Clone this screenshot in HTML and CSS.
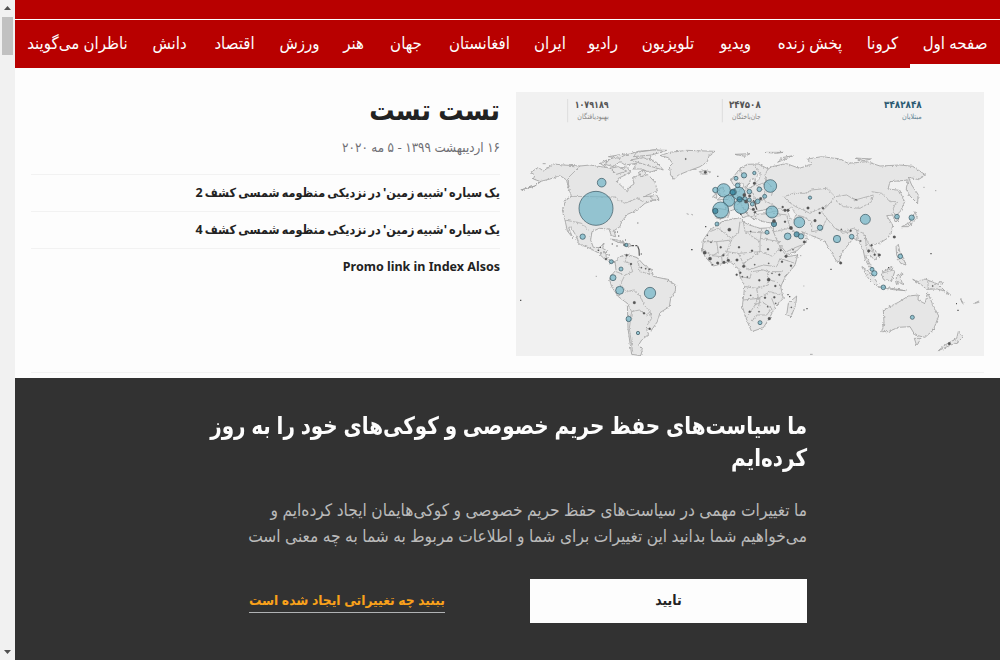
FILE: index.html
```html
<!DOCTYPE html>
<html lang="fa" dir="rtl">
<head>
<meta charset="utf-8">
<title>صفحه اول</title>
<link rel="stylesheet" href="styles.css">
</head>
<body>
<div class="page">
  <header class="brand"></header>
  <nav class="nav">
    <a class="nav-item active" style="width:66px">صفحه اول</a>
    <a class="nav-item" style="width:31px">کرونا</a>
    <a class="nav-item" style="width:66px">پخش زنده</a>
    <a class="nav-item" style="width:35px">ویدیو</a>
    <a class="nav-item" style="width:52px">تلویزیون</a>
    <a class="nav-item" style="width:30px">رادیو</a>
    <a class="nav-item" style="width:28px">ایران</a>
    <a class="nav-item" style="width:65px">افغانستان</a>
    <a class="nav-item" style="width:34px">جهان</a>
    <a class="nav-item" style="width:23px">هنر</a>
    <a class="nav-item" style="width:37px">ورزش</a>
    <a class="nav-item" style="width:45px">اقتصاد</a>
    <a class="nav-item" style="width:37px">دانش</a>
    <a class="nav-item" style="width:99px">ناظران می‌گویند</a>
  </nav>
  <main class="story">
    <svg class="media" viewBox="18 21 1404 792" direction="ltr">
      <defs>
        <filter id="rough" x="-2%" y="-2%" width="104%" height="104%">
          <feTurbulence type="fractalNoise" baseFrequency="0.14" numOctaves="2" seed="4"/>
          <feDisplacementMap in="SourceGraphic" scale="9" xChannelSelector="R" yChannelSelector="G"/>
        </filter>
      </defs>
      <rect class="sea" x="18" y="21" width="1404" height="792"/>
      <g filter="url(#rough)">
        <g class="land">
          <!-- North and Central America -->
          <path d="M32 315L75 303L92 290L70 282L75 270L62 262L85 247L100 258L130 237L160 240L210 243L240 240L285 247L320 252L350 245L362 262L325 280L322 292L337 305L350 319L360 305L372 297L368 280L395 265L415 270L435 292L442 318L400 335L425 333L446 340L405 355L382 375L352 388L335 410L330 425L312 437L317 455L304 452L297 432L268 430L246 440L242 465L250 487L270 488L283 472L278 490L290 497L288 515L302 527L315 530L300 535L284 522L262 502L240 490L207 477L197 450L182 425L176 428L188 458L172 438L165 405L157 375L168 343L185 335L174 305L170 285L150 272L120 282L88 290L75 303Z"/>
          <path d="M285 238L300 222L330 212L360 207L385 199L440 194L455 200L425 207L420 220L445 240L440 255L420 262L395 252L370 252L380 235L345 240L330 230L310 245ZM300 250L325 245L350 258L320 268ZM270 235L290 225L285 245ZM385 262L402 255L410 270L392 275Z"/>
          <path d="M380 202L430 195L470 196L425 210L370 215ZM295 215L350 206L330 220ZM360 225L400 218L440 232L460 255L425 245Z"/>
          <path d="M450 212L480 202L530 196L615 199L598 210L592 230L570 245L535 258L505 270L492 283L482 270L478 245L488 235L475 218Z"/>
          <path d="M568 260L585 256L602 261L590 268L575 267ZM420 335L440 330L447 343L430 345ZM302 462L322 465L345 475L325 472ZM340 478L360 476L362 484L342 483Z"/>
          <!-- South America -->
          <path d="M315 530L330 515L350 508L382 518L402 540L425 553L430 574L470 583L497 600L496 618L482 640L478 665L450 683L442 710L425 735L408 730L416 748L395 765L386 780L397 795L392 812L365 808L360 775L354 730L352 655L325 635L305 605L299 585L305 570L318 555Z"/>
          <!-- Africa and Madagascar -->
          <path d="M620 420L640 408L690 398L702 412L718 420L750 430L790 428L796 445L812 490L832 515L863 510L855 540L825 577L812 605L820 640L796 665L778 700L760 728L725 740L712 710L697 665L704 605L690 575L686 552L660 530L640 535L610 543L585 515L577 495L580 465L600 435ZM860 633L857 660L843 695L830 690L835 655Z"/>
          <!-- Eurasia -->
          <path d="M617 378L622 370L648 374L644 350L630 343L660 335L685 318L700 305L712 312L735 300L735 280L720 285L710 308L695 295L670 300L663 285L690 250L712 238L745 237L775 252L785 245L830 236L868 250L905 238L893 222L935 215L985 221L1015 235L1070 230L1110 243L1170 240L1208 244L1247 270L1225 284L1195 276L1205 300L1224 328L1223 356L1200 333L1188 312L1195 285L1140 290L1134 312L1168 316L1184 350L1172 378L1160 390L1166 405L1155 410L1148 390L1130 392L1148 420L1144 442L1132 460L1110 474L1080 480L1092 495L1110 510L1094 525L1075 505L1068 515L1088 552L1078 545L1066 525L1060 498L1048 468L1030 460L994 505L988 530L979 528L960 495L944 468L920 458L875 440L895 463L860 498L833 508L805 475L790 440L790 415L760 410L735 400L740 388L790 385L785 370L760 375L735 380L730 402L712 388L700 370L715 392L700 398L678 372L660 378L655 395L630 402L616 398Z"/>
          <path d="M622 345L632 335L625 315L638 306L645 330L655 343ZM608 335L620 325L620 340ZM675 208L720 206L705 214ZM765 202L820 202L800 205ZM1035 219L1085 222L1060 227ZM803 232L815 218L850 212L825 222Z"/>
          <!-- South-East Asia and Oceania -->
          <path d="M1054 543L1080 562L1104 595L1098 603L1075 580ZM1100 605L1140 609L1186 617L1150 614ZM1120 560L1145 547L1154 560L1145 588L1120 583L1115 570ZM1162 570L1182 565L1170 575L1178 598L1164 590L1160 600L1156 585ZM1208 583L1225 590L1245 582L1285 598L1305 618L1280 612L1250 613L1235 600ZM1158 485L1165 478L1170 503L1180 520L1188 540L1172 535L1160 510ZM1175 425L1200 412L1210 390L1215 380L1222 400L1195 425Z"/>
          <path d="M1120 675L1165 652L1195 633L1225 630L1224 645L1245 656L1253 623L1267 656L1286 693L1270 735L1245 757L1215 750L1200 725L1165 727L1135 740L1115 740L1122 714ZM1213 760L1233 760L1220 782ZM1345 740L1360 755L1345 770L1285 797L1305 780L1340 760Z"/>
          <path d="M1285 590L1300 591L1295 600ZM1310 620L1322 630L1312 627ZM1352 642L1360 655M1393 655L1408 652"/>
        </g>
        <g class="water">
          <path d="M735 295L748 282L752 262L742 272L735 290ZM765 385L800 378L812 392L780 396ZM832 375L845 366L857 390L852 405L840 400Z"/>
        </g>
        <g class="borders">
          <path d="M210 243L170 283M180 334L315 336L330 348L345 355L380 340L400 350M165 405L215 415L235 435M262 488L268 500M284 505L300 512M350 510L345 530L360 535L368 560L345 570L330 600L352 620L370 615L392 635L402 660L420 680L425 700L412 720M318 560L345 570M352 655L365 680L388 675L410 690L420 680M365 680L358 730L368 800M382 520L390 560L430 570M415 548L418 570"/>
          <path d="M625 430L665 460L685 445L690 410M700 410L705 440L780 445M705 440L750 470L755 430M600 440L625 430M580 470L620 470L625 505L600 512M620 470L665 465L650 500L685 505L750 500L750 470M580 495L605 512L635 515L650 500M635 515L637 535M655 505L650 530M685 505L700 535L750 500L790 515M700 535L715 555L760 540L800 545L810 520L855 535M690 575L720 580L725 560M725 560L760 555L775 560L775 600L740 610L705 605M775 560L815 560M775 585L800 590L815 605M740 610L745 640L700 645M745 640L780 620L815 630M745 640L735 660L715 690M735 660L755 650L785 670L770 690L740 690L725 710M785 640L795 665M750 460L810 470M790 510L810 490M750 640L745 670"/>
          <path d="M648 374L660 378M660 335L680 360L705 345L735 350M680 325L690 350L700 370M705 315L730 325L735 350L760 345L765 320L740 300M760 345L790 360L800 370M715 370L735 378M690 250L700 280M735 240L748 262M775 250L765 270L770 290L745 300M770 290L790 310L785 330M790 385L830 390L840 430M800 370L830 375M857 390L880 395L905 410L905 440M857 365L835 350L822 335L850 325L885 325L905 315L950 310L975 335L960 355L930 370L900 385L880 375L857 365M975 335L1010 330L1035 345L1090 330L1085 350L1050 370L1000 365L975 345M1085 320L1115 325L1140 350L1160 350L1150 370L1155 390M960 355L935 380L950 400L975 430L1000 440L1030 430L1060 445L1075 475M905 440L935 435L950 400M975 430L1000 445L1022 440M1040 435L1045 465M1065 450L1070 490L1095 505M1075 475L1090 500M790 440L840 430L870 450M830 500L850 490L875 480M1253 585L1255 613M1115 565L1150 555"/>
        </g>
      </g>
      <path class="specks" d="M321 441h3M324 453h4M305 477h4M319 483h4M345 465h3M340 480h8M364 482h8M376 482h6M383 484l4 10l1 18M392 507h4M269 487h4M263 496h4M271 504h4M280 501h4M382 414h3M543 494h5M30 646h4M622 274h3M832 629h4M837 635h4M880 675h4M889 671h4M961 553h4M1261 506h4M1150 455h4M1338 656h3M1342 676h4M690 388h5M585 425h4M730 345l8 15M735 360l6 14M1134 548h4"/>
      <path class="faint" d="M98 236h9M175 285v25M257 574h4M530 386l6 2M544 388l5 2M900 808h8M880 603h3M1240 307h4M1275 317h4M870 512h4M1352 642l6 14M1395 654l12-6"/>
      <g class="bubbles">
        <circle cx="258" cy="370" r="51"/><circle cx="275" cy="293" r="13"/><circle cx="218" cy="455" r="8"/><circle cx="304" cy="530" r="6"/><circle cx="333" cy="552" r="6"/><circle cx="309" cy="578" r="9"/><circle cx="329" cy="616" r="12"/><circle cx="420" cy="624" r="17"/><circle cx="356" cy="702" r="8"/><circle cx="384" cy="744" r="5"/><circle cx="349" cy="480" r="5"/>
        <circle cx="641" cy="316" r="20"/><circle cx="616" cy="315" r="8"/><circle cx="657" cy="347" r="17"/><circle cx="686" cy="325" r="19"/><circle cx="670" cy="321" r="9"/><circle class="deep" cx="668" cy="322" r="8"/><circle cx="632" cy="375" r="24"/><circle class="deep" cx="616" cy="378" r="8"/><circle cx="694" cy="364" r="22"/><circle cx="683" cy="301" r="7"/><circle cx="678" cy="280" r="6"/><circle cx="702" cy="271" r="8"/><circle cx="718" cy="320" r="7"/><circle class="deep" cx="689" cy="343" r="8"/><circle cx="705" cy="341" r="6"/><circle cx="733" cy="264" r="5"/><circle cx="718" cy="345" r="6"/><circle cx="748" cy="313" r="7"/><circle cx="764" cy="334" r="6"/><circle cx="743" cy="349" r="7"/><circle cx="727" cy="357" r="6"/><circle cx="781" cy="303" r="19"/><circle cx="786" cy="381" r="18"/><circle class="deep" cx="792" cy="417" r="8"/><circle cx="868" cy="412" r="16"/><circle cx="1066" cy="403" r="15"/><circle cx="1161" cy="395" r="7"/><circle cx="1205" cy="398" r="8"/><circle cx="621" cy="417" r="6"/><circle cx="771" cy="442" r="6"/><circle cx="833" cy="454" r="10"/><circle class="deep" cx="860" cy="448" r="8"/><circle cx="873" cy="454" r="8"/><circle cx="930" cy="428" r="8"/><circle cx="981" cy="462" r="11"/><circle cx="1025" cy="455" r="7"/><circle cx="1171" cy="514" r="7"/><circle cx="1086" cy="553" r="6"/><circle cx="1093" cy="565" r="8"/><circle cx="1120" cy="607" r="7"/><circle cx="1207" cy="697" r="6"/><circle cx="750" cy="713" r="6"/><circle cx="900" cy="338" r="5"/>
      </g>
      <g class="dots">
        <circle cx="527" cy="222" r="2"/><circle cx="586" cy="262" r="4"/><circle cx="363" cy="537" r="3"/><circle cx="394" cy="548" r="2"/><circle cx="407" cy="551" r="2"/><circle cx="418" cy="553" r="2"/><circle cx="373" cy="653" r="4"/><circle cx="402" cy="685" r="3"/><circle cx="419" cy="731" r="3"/><circle cx="288" cy="522" r="3"/><circle cx="350" cy="511" r="3"/>
        <circle cx="658" cy="434" r="5"/><circle cx="592" cy="451" r="2"/><circle cx="603" cy="472" r="2"/><circle cx="632" cy="487" r="3"/><circle cx="687" cy="487" r="3"/><circle cx="722" cy="439" r="2"/><circle cx="726" cy="497" r="3"/><circle cx="774" cy="493" r="3"/><circle cx="584" cy="503" r="5"/><circle cx="600" cy="521" r="5"/><circle cx="623" cy="534" r="4"/><circle cx="642" cy="532" r="4"/><circle cx="655" cy="526" r="4"/><circle cx="681" cy="525" r="4"/><circle cx="640" cy="511" r="3"/><circle cx="607" cy="539" r="2"/><circle cx="701" cy="544" r="4"/><circle cx="680" cy="569" r="3"/><circle cx="734" cy="539" r="2"/><circle cx="776" cy="535" r="2"/><circle cx="816" cy="530" r="3"/><circle cx="843" cy="542" r="3"/><circle cx="828" cy="514" r="4"/><circle cx="812" cy="496" r="3"/><circle cx="849" cy="494" r="2"/><circle cx="883" cy="471" r="4"/><circle cx="691" cy="563" r="3"/><circle cx="697" cy="575" r="2"/><circle cx="712" cy="576" r="2"/><circle cx="748" cy="586" r="3"/><circle cx="776" cy="584" r="5"/><circle cx="786" cy="565" r="2"/><circle cx="808" cy="569" r="3"/><circle cx="796" cy="603" r="3"/><circle cx="722" cy="631" r="2"/><circle cx="765" cy="638" r="3"/><circle cx="793" cy="637" r="3"/><circle cx="797" cy="655" r="2"/><circle cx="719" cy="680" r="3"/><circle cx="747" cy="680" r="2"/><circle cx="773" cy="665" r="2"/><circle cx="778" cy="701" r="4"/><circle cx="844" cy="667" r="2"/>
        <circle cx="733" cy="295" r="4"/><circle cx="719" cy="333" r="4"/><circle cx="703" cy="330" r="5"/><circle cx="708" cy="350" r="5"/><circle cx="730" cy="373" r="4"/><circle cx="735" cy="382" r="3"/><circle cx="752" cy="341" r="4"/><circle cx="818" cy="366" r="3"/><circle cx="825" cy="376" r="4"/><circle cx="834" cy="376" r="4"/><circle cx="825" cy="410" r="3"/><circle cx="843" cy="429" r="5"/><circle cx="894" cy="369" r="4"/><circle cx="939" cy="370" r="3"/><circle cx="929" cy="384" r="3"/><circle cx="915" cy="407" r="4"/><circle cx="1038" cy="344" r="2"/><circle cx="994" cy="433" r="2"/><circle cx="1022" cy="437" r="3"/><circle cx="1052" cy="468" r="2"/><circle cx="1076" cy="498" r="4"/><circle cx="1094" cy="509" r="3"/><circle cx="1108" cy="510" r="4"/><circle cx="1085" cy="481" r="3"/><circle cx="1153" cy="456" r="4"/><circle cx="992" cy="534" r="4"/><circle cx="1268" cy="603" r="2"/><circle cx="1318" cy="776" r="4"/><circle cx="792" cy="408" r="5"/>
      </g>
      <path class="rules" d="M173 42V112M637 42V112"/>
      <g class="stats">
        <text class="num" x="194" y="68" textLength="102" lengthAdjust="spacingAndGlyphs">۱۰۷۹۱۸۹</text>
        <text class="cap" x="202" y="101" textLength="94" lengthAdjust="spacingAndGlyphs">بهبودیافتگان</text>
        <text class="num" x="657" y="68" textLength="95" lengthAdjust="spacingAndGlyphs">۲۴۷۵۰۸</text>
        <text class="cap" x="666" y="101" textLength="86" lengthAdjust="spacingAndGlyphs">جان‌باختگان</text>
        <text class="num blue" x="1122" y="68" textLength="113" lengthAdjust="spacingAndGlyphs">۳۴۸۲۸۴۸</text>
        <text class="cap blue" x="1176" y="101" textLength="59" lengthAdjust="spacingAndGlyphs">مبتلایان</text>
      </g>
    </svg>
    <div class="copy">
      <h1 class="headline">تست تست</h1>
      <time class="date">۱۶ اردیبهشت ۱۳۹۹ - ۵ مه ۲۰۲۰</time>
      <ul class="links">
        <li>یک سیاره 'شبیه زمین' در نزدیکی منظومه شمسی کشف 2</li>
        <li>یک سیاره 'شبیه زمین' در نزدیکی منظومه شمسی کشف 4</li>
        <li class="latin">Promo link in Index Alsos</li>
      </ul>
    </div>
  </main>
  <section class="consent">
    <div class="consent-body">
      <h2 class="consent-title">ما سیاست‌های حفظ حریم خصوصی و کوکی‌های خود را به روز<br>کرده‌ایم</h2>
      <p class="consent-text">ما تغییرات مهمی در سیاست‌های حفظ حریم خصوصی و کوکی‌هایمان ایجاد کرده‌ایم و<br>می‌خواهیم شما بدانید این تغییرات برای شما و اطلاعات مربوط به شما به چه معنی است</p>
      <div class="actions">
        <button class="accept">تایید</button>
        <div class="more"><a class="more-link">ببنید چه تغییراتی ایجاد شده است</a></div>
      </div>
    </div>
  </section>
</div>
<div class="scrollbar">
  <svg class="arrow" viewBox="0 0 15 16"><path d="M4 10L7.5 6L11 10Z"/></svg>
  <div class="track"><div class="thumb"></div></div>
  <svg class="arrow" viewBox="0 0 15 16"><path d="M4 6L7.5 10L11 6Z"/></svg>
</div>
</body>
</html>
```
FILE: styles.css
```css
* { box-sizing: border-box; }
body {
  margin: 0;
  height: 660px;
  display: flex;
  overflow: hidden;
  background: #fdfdfd;
  color: #222;
  font-family: "Noto Sans", "DejaVu Sans Condensed", "DejaVu Sans", sans-serif;
}
.page { width: 985px; display: flex; flex-direction: column; }
.brand { height: 20px; background: #b80000; border-bottom: 1px solid #fdfdfd; }
.nav {
  height: 48px;
  display: flex;
  gap: 24px;
  padding: 0 12px;
  background: #b80000;
  color: #fdfdfd;
  font-size: 16.7px;
  line-height: 45px;
  white-space: nowrap;
}
.nav-item { display: flex; justify-content: center; flex: none; }
.nav-item.active {
  box-sizing: content-box;
  height: 44px;
  margin: 0 -12px;
  padding: 0 12px;
  border-bottom: 4px solid #fdfdfd;
}
.story {
  height: 281px;
  margin: 24px 16px 0;
  display: flex;
  gap: 16px;
  border-bottom: 1px solid #f2f2f2;
}
.media { width: 468px; height: 264px; flex: none; }
.copy { width: 469px; }
.headline { margin: 0; font-size: 28px; line-height: 35px; font-weight: 700; }
.date { display: block; margin-top: 8px; font-size: 13.3px; line-height: 24px; color: #6e6e73; }
.links {
  list-style: none;
  margin: 15px 0 0;
  padding: 0;
  font-size: 12.5px;
  font-weight: 700;
  line-height: 36px;
  white-space: nowrap;
}
.links li { border-top: 1px solid #f2f2f2; height: 37px; word-spacing: -1.1px; }
.links .latin { word-spacing: 0; }
.consent { margin-top: 5px; flex: 1; background: #323232; padding: 31px 193px 0 0; }
.consent-body { width: 600px; white-space: nowrap; }
.consent-title {
  margin: 0;
  color: #fdfdfd;
  font-size: 24px;
  line-height: 32px;
  transform: scaleX(.923);
  transform-origin: right;
}
.consent-text { margin: 24px 0 30px; color: #bababa; font-size: 17.2px; line-height: 26px; }
.actions { display: flex; }
.accept {
  width: 277px;
  height: 44px;
  padding: 0 0 3px;
  border: 0;
  background: #fdfdfd;
  color: #222;
  font: inherit;
  font-size: 14px;
  font-weight: 700;
}
.more { width: 277px; margin-right: 8px; padding: 8px 77px 0 0; }
.more-link {
  display: inline-block;
  border-bottom: 1px solid #b0b2b4;
  color: #f9a11b;
  font-size: 13.7px;
  line-height: 25px;
  font-weight: 700;
}
.scrollbar { width: 15px; display: flex; flex-direction: column; background: #f1f1f1; }
.arrow { width: 15px; height: 16px; fill: #505050; }
.track { flex: 1; padding: 1px 2px; }
.thumb { height: 38px; background: #c1c1c1; }

.sea { fill: #f1f1f1; }
.land { fill: #e6e6e6; stroke: #a4a4a4; stroke-width: 2.6; }
.water { fill: #f1f1f1; stroke: #aaa; stroke-width: 2; }
.borders { fill: none; stroke: #aaa; stroke-width: 2.4; }
.specks { fill: none; stroke: #555; stroke-width: 3.5; }
.faint { fill: none; stroke: #aaa; stroke-width: 3; }
.bubbles { fill: #6fb3c6; fill-opacity: .7; stroke: #35505a; stroke-width: 2; }
.deep { fill: #2f7f99; }
.dots { fill: #555; stroke: #555; stroke-width: .8; }
.rules { stroke: #ddd; stroke-width: 3; }
.stats { font-family: "DejaVu Sans Condensed", "DejaVu Sans", sans-serif; fill: #555; }
.num { font-size: 30px; font-weight: 700; }
.cap { font-size: 22px; fill: #888; }
.num.blue { fill: #2b5a72; }
.cap.blue { fill: #648595; }
```
